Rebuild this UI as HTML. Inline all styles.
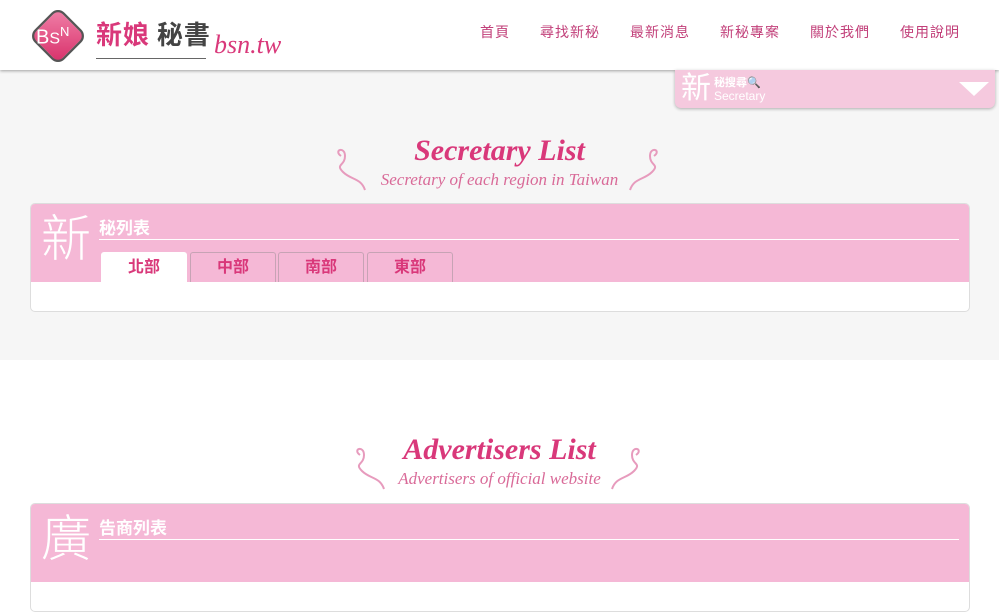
<!DOCTYPE html>
<html><head><meta charset="utf-8"><style>
*{margin:0;padding:0;box-sizing:border-box}
body{width:999px;height:616px;overflow:hidden;background:#fff;font-family:"Liberation Sans","Noto Sans CJK TC",sans-serif;position:relative}
.hdr{position:absolute;left:0;top:0;width:999px;height:70px;background:#fff;box-shadow:0 1px 3px rgba(0,0,0,.35);z-index:2}
.nav{position:absolute;top:22px;font-size:14px;color:#c2407a;letter-spacing:1px}
.gray{position:absolute;left:0;top:70px;width:999px;height:290px;background:#f6f6f6}
.srch{position:absolute;left:675px;top:70px;width:320px;height:38px;background:#f5c9de;border-radius:0 0 6px 6px;box-shadow:0 1px 3px rgba(0,0,0,.3);z-index:3;color:#fff}
.title{position:absolute;width:999px;text-align:center;font-family:"Liberation Serif",serif;font-style:italic;color:#d9387a}
.panel{position:absolute;left:30px;width:940px;height:109px;border:1px solid #ddd;border-radius:5px;background:#fff;overflow:hidden}
.ph{height:78px;background:#f5b8d6;position:relative;color:#fff}
.big{position:absolute;left:10px;top:10px;font-size:50px;font-weight:300;line-height:1}
.sm{position:absolute;left:68px;top:10px;font-size:17px;font-weight:bold}
.ln{position:absolute;left:68px;right:10px;top:35px;border-top:1px solid #fff}
.tab{position:absolute;top:48px;width:86px;height:30px;border:1px solid #c7a3b5;border-bottom:none;border-radius:3px 3px 0 0;background:#f5b8d6;color:#d9387a;font-weight:bold;font-size:16px;text-align:center;line-height:30px}
.fl{position:absolute;width:34px;height:44px}
</style></head><body>
<div class="hdr">
 <div style="position:absolute;left:30px;top:8px;width:56px;height:56px;transform:rotate(45deg) scale(.75);border-radius:12px;background:linear-gradient(135deg,#f080a8,#d8306a);border:3px solid #555"></div>
 <div style="position:absolute;left:36px;top:24px;font-size:20px;color:#fff;font-family:'Liberation Sans'">B<span style="font-size:16px">S</span><sup style="font-size:13px">N</sup></div>
 <div style="position:absolute;left:96px;top:16px;font-size:26px;font-weight:bold;color:#d9387a;font-family:'Noto Sans CJK TC';letter-spacing:1px;line-height:36px">新娘 <span style="color:#444">秘書</span></div>
 <div style="position:absolute;left:96px;top:58px;width:110px;border-top:1px solid #666"></div>
 <div style="position:absolute;left:214px;top:30px;font-size:26px;color:#d9387a;font-family:'Liberation Serif';font-style:italic">bsn.tw</div>
 <div class="nav" style="left:480px">首頁</div>
 <div class="nav" style="left:540px">尋找新秘</div>
 <div class="nav" style="left:630px">最新消息</div>
 <div class="nav" style="left:720px">新秘專案</div>
 <div class="nav" style="left:810px">關於我們</div>
 <div class="nav" style="left:900px">使用說明</div>
</div>
<div class="gray"></div>
<div class="srch">
 <div style="position:absolute;left:6px;top:2px;font-size:30px;line-height:34px">新</div>
 <div style="position:absolute;left:39px;top:4px;font-size:11px;font-weight:bold">秘搜尋🔍</div>
 <div style="position:absolute;left:39px;top:19px;font-size:12px">Secretary</div>
 <div style="position:absolute;right:6px;top:12px;width:0;height:0;border-left:15px solid transparent;border-right:15px solid transparent;border-top:14px solid #fff"></div>
</div>
<svg class="fl" style="left:333px;top:148px" viewBox="0 0 34 44"><path d="M8 8 C0 2 12 -2 12 8 C12 18 2 16 10 24 C18 32 28 30 32 42" fill="none" stroke="#e79bbd" stroke-width="2"/></svg>
<svg class="fl" style="left:628px;top:148px" viewBox="0 0 34 44"><path d="M26 8 C34 2 22 -2 22 8 C22 18 32 16 24 24 C16 32 6 30 2 42" fill="none" stroke="#e79bbd" stroke-width="2"/></svg>
<div class="title" style="top:134px;font-size:30px;font-weight:bold">Secretary List</div>
<div class="title" style="top:170px;font-size:17px;color:#d96a98">Secretary of each region in Taiwan</div>
<div class="panel" style="top:203px">
 <div class="ph"><div class="big">新</div><div class="sm">秘列表</div><div class="ln"></div>
  <div class="tab" style="left:70px;background:#fff;border-color:#fff">北部</div>
  <div class="tab" style="left:159px">中部</div>
  <div class="tab" style="left:247px">南部</div>
  <div class="tab" style="left:336px">東部</div>
 </div>
</div>
<svg class="fl" style="left:352px;top:447px" viewBox="0 0 34 44"><path d="M8 8 C0 2 12 -2 12 8 C12 18 2 16 10 24 C18 32 28 30 32 42" fill="none" stroke="#e79bbd" stroke-width="2"/></svg>
<svg class="fl" style="left:610px;top:447px" viewBox="0 0 34 44"><path d="M26 8 C34 2 22 -2 22 8 C22 18 32 16 24 24 C16 32 6 30 2 42" fill="none" stroke="#e79bbd" stroke-width="2"/></svg>
<div class="title" style="top:433px;font-size:30px;font-weight:bold">Advertisers List</div>
<div class="title" style="top:469px;font-size:17px;color:#d96a98">Advertisers of official website</div>
<div class="panel" style="top:503px">
 <div class="ph"><div class="big">廣</div><div class="sm">告商列表</div><div class="ln"></div></div>
</div>
</body></html>
